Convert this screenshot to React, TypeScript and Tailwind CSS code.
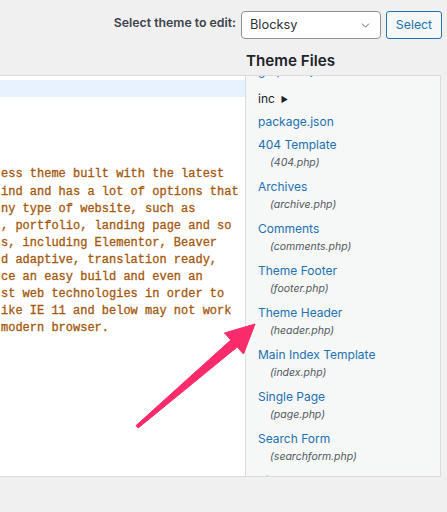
import { ChevronDown } from "lucide-react";

const codeLines = [
  "",
  "",
  "",
  "",
  "",
  "ess theme built with the latest",
  "ind and has a lot of options that",
  "ny type of website, such as",
  ", portfolio, landing page and so",
  "s, including Elementor, Beaver",
  "d adaptive, translation ready,",
  "ce an easy build and even an",
  "st web technologies in order to",
  "ike IE 11 and below may not work",
  "modern browser.",
  "",
  "",
  "",
  "",
  "",
  "",
  "",
  "",
];

const templates = [
  { name: "404 Template", file: "404.php" },
  { name: "Archives", file: "archive.php" },
  { name: "Comments", file: "comments.php" },
  { name: "Theme Footer", file: "footer.php" },
  { name: "Theme Header", file: "header.php" },
  { name: "Main Index Template", file: "index.php" },
  { name: "Single Page", file: "page.php" },
  { name: "Search Form", file: "searchform.php" },
  { name: "Sidebar", file: "sidebar.php" },
];

function Arrow() {
  return (
    <svg
      className="pointer-events-none absolute left-0 top-0"
      width="447"
      height="512"
      viewBox="0 0 447 512"
    >
      <polygon
        points="255,324 243.5,354 237.2,347 138.2,428 136,425.6 230.8,340 224.5,333"
        fill="#fb2a6a"
        stroke="#fb2a6a"
        strokeWidth="1"
        strokeLinejoin="round"
      />
    </svg>
  );
}

export default function App() {
  return (
    <div className="relative h-[512px] w-[447px] overflow-hidden bg-[#f0f0f1] font-['Inter',sans-serif] text-[#1d2327]">
      {/* theme picker */}
      <div className="flex h-[39px] items-end justify-end gap-[5px] pr-[5px]">
        <label className="mb-[7px] text-[12.3px] font-semibold text-[#3c434a]">
          Select theme to edit:
        </label>
        <div className="flex h-[28px] w-[140px] items-center justify-between rounded-[4px] border border-[#8c8f94] bg-white pl-[8px] pr-[8px]">
          <span className="text-[12.8px] text-[#2c3338]">Blocksy</span>
          <ChevronDown size={13} strokeWidth={1.6} className="text-[#50575e]" />
        </div>
        <button className="h-[28px] w-[56px] rounded-[3px] border border-[#2271b1] bg-[#f6f7f7] text-[12.3px] text-[#2271b1]">
          Select
        </button>
      </div>

      <h2 className="mt-[12px] h-[24px] pl-[246px] text-[15.2px] font-semibold leading-[20px] text-[#1d2327]">
        Theme Files
      </h2>

      <div className="flex h-[402px]">
        {/* code editor */}
        <div className="w-[245px] overflow-hidden border-y border-[#dcdcde] bg-white pt-[4px]">
          {codeLines.map((line, i) => (
            <div
              key={i}
              className={`h-[17.1px] whitespace-pre pl-[1px] font-['Liberation_Mono',monospace] text-[12px] leading-[19px] text-[#a4570c] [-webkit-text-stroke:0.3px_#a4570c] ${
                i === 0 ? "bg-[#e8f2ff]" : ""
              }`}
            >
              {line}
            </div>
          ))}
        </div>

        {/* file list */}
        <div className="w-[196px] overflow-hidden border border-[#dcdcde] bg-[#f6f7f7] pl-[12px] text-[12px]">
          <div className="-mt-[17px] pb-[7px] pt-[3px] leading-[18px] text-[#2271b1]">
            graphics.js
          </div>
          <div className="flex items-center gap-[6px] pb-[2px] pt-[3px] leading-[18px] text-[#1d2327]">
            inc
            <span className="text-[8px] text-[#1d2327]">▶</span>
          </div>
          <div className="pb-[2px] pt-[3px] leading-[18px] text-[#2271b1]">
            package.json
          </div>
          {templates.map((t) => (
            <div key={t.file} className="pb-[3px] pt-[3px]">
              <div className="leading-[18px] text-[#2271b1]">{t.name}</div>
              <div className="pl-[12px] text-[10.5px] italic leading-[18px] text-[#50575e]">
                ({t.file})
              </div>
            </div>
          ))}
        </div>
      </div>

      <Arrow />
    </div>
  );
}
